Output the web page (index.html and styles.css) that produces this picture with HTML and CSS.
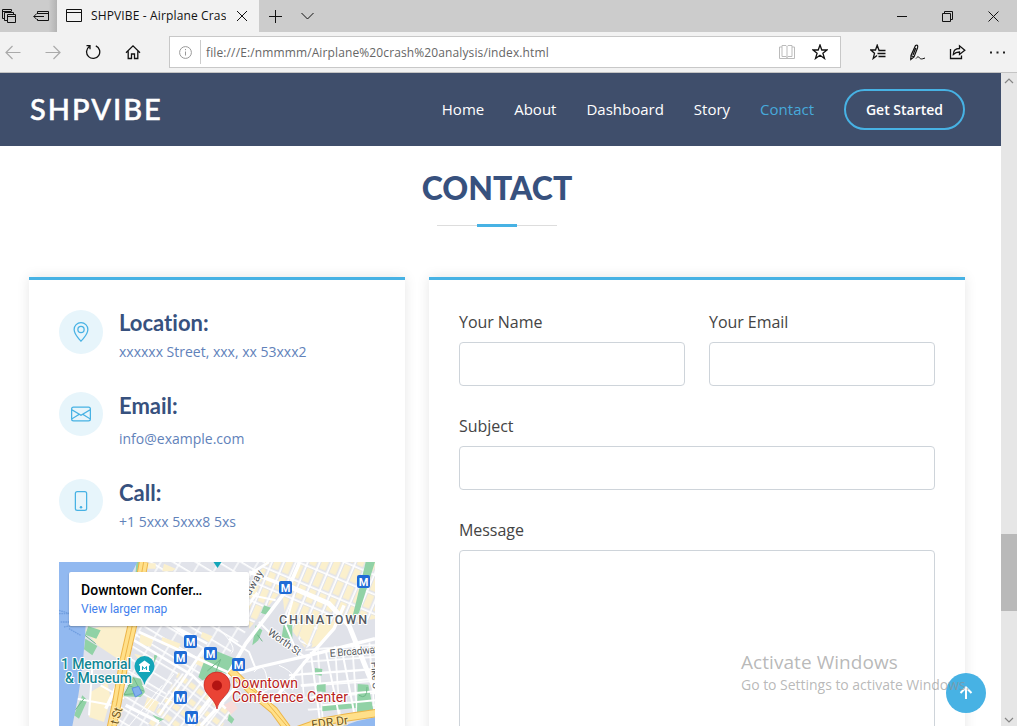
FILE: index.html
```html
<!DOCTYPE html>
<html lang="en">
<head>
<meta charset="utf-8">
<title>SHPVIBE - Airplane Crash Analysis</title>
<link rel="stylesheet" href="styles.css">
</head>
<body>
<div class="window">
  <div class="tabbar">
    <div class="tab-tools">
      <svg class="ico ico-tabs" width="16" height="16" viewBox="0 0 16 16"><path d="M3.500 10.500H1.500V1.500H10.500V3.500M1.500 3.500H10M6 12.500H3.500V4.500H12.500V6.500M6.500 6.500H14.500V14.500H6.500ZM7 8.500H14"/></svg>
      <svg class="ico" width="17" height="16" viewBox="0 0 17 16"><path d="M4.500 6V3.500H15.500V12.500H4.500V11M4.500 5.500H15.500M.8 8.500H11M3.800 5.500L.8 8.500L3.800 11.500"/></svg>
    </div>
    <div class="tab">
      <svg class="ico" width="16" height="14" viewBox="0 0 16 14"><path d="M.5.500H15.500V12.500H.5ZM.5 3.500H15.500"/></svg>
      <span class="tab-title">SHPVIBE - Airplane Crash Analysis</span>
      <svg class="ico tab-close" width="10" height="10" viewBox="0 0 10 10"><path d="M0 0L10 10M10 0L0 10"/></svg>
    </div>
    <svg class="ico new-tab" width="13" height="13" viewBox="0 0 13 13"><path d="M6.500 0V13M0 6.500H13"/></svg>
    <svg class="ico tab-list" width="13" height="8" viewBox="0 0 13 8"><path d="M.5 1L6.500 7L12.500 1"/></svg>
    <div class="window-controls">
      <svg class="ico" width="10" height="11" viewBox="0 0 10 11"><path d="M0 5.500H10"/></svg>
      <svg class="ico" width="11" height="11" viewBox="0 0 11 11"><path d="M.5 2.500H8.500V10.500H.5ZM2.500 2.500V.5H10.500V8.500H8.500"/></svg>
      <svg class="ico" width="11" height="11" viewBox="0 0 11 11"><path d="M.5.500L10.500 10.500M10.500.500L.5 10.500"/></svg>
    </div>
  </div>

  <div class="toolbar">
    <div class="nav-buttons">
      <svg class="ico dim" width="16" height="16" viewBox="0 0 16 16"><path d="M15.500 8.500H1M7.500 2L1 8.500L7.500 15"/></svg>
      <svg class="ico dim" width="16" height="16" viewBox="0 0 16 16"><path d="M.5 8.500H15M8.500 2L15 8.500L8.500 15"/></svg>
      <svg class="ico thick" width="16" height="16" viewBox="0 0 16 16"><path d="M10.800 1.800A6.600 6.600 0 1 1 4.300 2.500M1.500 1.700H5V5.300"/></svg>
      <svg class="ico thick" width="16" height="16" viewBox="0 0 16 16"><path d="M1 8.800L8 1.800L15 8.800M3.200 7.200V14.500H6.500V10H9.500V14.500H12.800V7.200"/></svg>
    </div>
    <div class="address">
      <svg class="ico info" width="13" height="13" viewBox="0 0 13 13"><circle cx="6.500" cy="6.500" r="5.900"/><path d="M6.500 5.500V9.500M6.500 3V4.200"/></svg>
      <span class="address-rule"></span>
      <span class="url">file:///E:/nmmmm/Airplane%20crash%20analysis/index.html</span>
      <svg class="ico book" width="16" height="15" viewBox="0 0 16 15"><path d="M3 2H.5V13.500H15.500V2H13M3 11.500V.5H7L8 1.500L9 .5H13V11.500H9L8 12.500L7 11.500ZM8 1.500V13"/></svg>
      <svg class="ico star" width="16" height="16" viewBox="0 0 16 16"><path d="M8 1L9.800 6H15L10.900 9.200L12.500 14.500L8 11.300L3.500 14.500L5.100 9.200L1 6H6.200Z"/></svg>
    </div>
    <div class="tool-buttons">
      <svg class="ico thick" width="16" height="16" viewBox="0 0 16 16"><path d="M9.500 5.800H8.800L7.200 1.200L5.500 6H.8L4.500 9.300L3.200 14.500L7 11.500M8.500 6.500H15.500M7.500 9.500H15.500M8.500 12.500H15.500"/></svg>
      <svg class="ico" width="17" height="17" viewBox="0 0 17 17"><path d="M6.500 1.500Q9.500 .2 8.500 4L5 13L1.800 15.500L2 11.500ZM2 11.500L5 13M6.800 4L4 11" stroke-width="1.200"/><path d="M7 14.500C9.500 11.500 9.500 13 10.500 14S12.500 15.500 16 14"/></svg>
      <svg class="ico thick" width="17" height="16" viewBox="0 0 17 16"><path d="M1.500 5V14.500H12.500V11.500M4.300 10.500C4.300 6.500 6.500 4.500 10.500 4.500V1.800L15.800 6.300L10.500 10.500V8C7.500 8 6 8.800 4.300 10.500Z"/></svg>
      <svg class="dots" width="15" height="3" viewBox="0 0 15 3"><path d="M0 .5H2V2.500H0ZM6.500.5H8.500V2.500H6.500ZM13 .5H15V2.500H13Z"/></svg>
    </div>
  </div>

  <div class="viewport">
    <div class="page">
      <header class="site-header">
        <div class="logo">SHPVIBE</div>
        <nav class="site-nav">
          <a>Home</a><a>About</a><a>Dashboard</a><a>Story</a><a class="active">Contact</a>
          <a class="get-started">Get Started</a>
        </nav>
      </header>

      <main class="contact">
        <h2 class="section-title">CONTACT</h2>
        <div class="divider"><span class="divider-accent"></span></div>
        <div class="cards">
          <section class="card info-card">
            <div class="info-item">
              <span class="info-icon"><svg width="20" height="20" viewBox="0 0 16 16"><path d="M12.166 8.940c-.524 1.062-1.234 2.120-1.960 3.070A32 32 0 0 1 8 14.580a32 32 0 0 1-2.206-2.570c-.726-.950-1.436-2.008-1.960-3.070C3.304 7.867 3 6.862 3 6a5 5 0 0 1 10 0c0 .862-.305 1.867-.834 2.940M8 16s6-5.686 6-10A6 6 0 0 0 2 6c0 4.314 6 10 6 10"/><path d="M8 8a2 2 0 1 1 0-4 2 2 0 0 1 0 4m0 1a3 3 0 1 0 0-6 3 3 0 0 0 0 6"/></svg></span>
              <div><h4>Location:</h4><p>xxxxxx Street, xxx, xx 53xxx2</p></div>
            </div>
            <div class="info-item email">
              <span class="info-icon"><svg width="20" height="20" viewBox="0 0 16 16"><path d="M0 4a2 2 0 0 1 2-2h12a2 2 0 0 1 2 2v8a2 2 0 0 1-2 2H2a2 2 0 0 1-2-2zm2-1a1 1 0 0 0-1 1v.217l7 4.200 7-4.200V4a1 1 0 0 0-1-1zm13 2.383-4.708 2.825L15 11.105zm-.034 6.876-5.640-3.471L8 9.583l-1.326-.795-5.640 3.470A1 1 0 0 0 2 13h12a1 1 0 0 0 .966-.741M1 11.105l4.708-2.897L1 5.383z"/></svg></span>
              <div><h4>Email:</h4><p>info@example.com</p></div>
            </div>
            <div class="info-item call">
              <span class="info-icon"><svg width="20" height="20" viewBox="0 0 16 16"><path d="M11 1a1 1 0 0 1 1 1v12a1 1 0 0 1-1 1H5a1 1 0 0 1-1-1V2a1 1 0 0 1 1-1zM5 0a2 2 0 0 0-2 2v12a2 2 0 0 0 2 2h6a2 2 0 0 0 2-2V2a2 2 0 0 0-2-2z"/><path d="M8 14a1 1 0 1 0 0-2 1 1 0 0 0 0 2"/></svg></span>
              <div><h4>Call:</h4><p>+1 5xxx 5xxx8 5xs</p></div>
            </div>
            <div class="map">
              <svg class="map-art" width="316" height="164" viewBox="59 562 316 164">
                <defs>
                  <g id="metro"><rect x="-6.500" y="-6.500" width="13" height="13" rx="2" fill="#1f6bd6"/><text y="4" class="metro-m">M</text></g>
                  <pattern id="blocks-east" width="33" height="54" patternUnits="userSpaceOnUse" patternTransform="translate(742 10) rotate(23)"><rect width="33" height="54" fill="#fff"/><rect x="3" y="3" width="28" height="49" fill="#e1e3ea"/><rect x="6" y="5" width="20" height="42" fill="#fbf0cd"/></pattern>
                  <pattern id="blocks-tribeca" width="50" height="35" patternUnits="userSpaceOnUse" patternTransform="translate(250 190) rotate(31)"><rect width="50" height="35" fill="#fff"/><rect x="2" y="2" width="46" height="30" fill="#e1e3ea"/></pattern>
                  <pattern id="blocks-south" width="40" height="30" patternUnits="userSpaceOnUse" patternTransform="translate(330 390) rotate(-53)"><rect width="40" height="30" fill="#fff"/><rect x="2" y="3" width="36" height="25" fill="#e1e3ea"/><rect x="8" y="5" width="16" height="20" fill="#fbf0cd"/></pattern>
                  <pattern id="blocks-river" width="52" height="36" patternUnits="userSpaceOnUse" patternTransform="translate(724 264) rotate(-4)"><rect width="52" height="36" fill="#fff"/><rect x="3" y="3" width="47" height="31" fill="#e0e2e9"/></pattern>
                </defs>
                <g transform="translate(59 562) scale(.33333)">
                  <rect width="948" height="492" fill="#e0e2e9"/>
                  <path d="M260 0H620L570 60V30H260Z" fill="url(#blocks-tribeca)"/>
                  <path d="M230 190H575L470 330L300 492H170Z" fill="url(#blocks-tribeca)"/>
                  <path d="M360 330L440 360L520 450L490 492H265Z" fill="url(#blocks-south)"/>
                  <path d="M620 0H948V170L840 190L665 90L570 200V90Z" fill="url(#blocks-east)"/>
                  <path d="M670 95L840 140L820 205L740 260L680 180Z" fill="url(#blocks-east)"/>
                  <path d="M740 260L948 240V455L760 490L720 350Z" fill="url(#blocks-river)"/>
                  <!-- cream plazas -->
                  <g fill="#fbf0cd">
                    <path d="M120 195L205 192L190 300L115 250L78 205ZM95 390L145 360L155 410L135 480L90 465ZM225 275L285 290L245 300ZM245 215L285 225L275 255L240 245ZM310 225L365 245L355 265L305 245ZM420 285L455 290L440 320L410 305Z"/>
                    <path d="M260 4H290V20H260ZM315 5L350 20L340 28H310ZM430 210L460 223L450 240L425 225ZM265 405L300 420L285 450L255 435ZM735 180L775 168L745 250L720 220ZM785 170L825 185L790 245L757 257Z"/>
                  </g>
                  <!-- parks -->
                  <g fill="#91d2a6">
                    <path d="M450 258L540 295L515 340L490 330L430 355L418 345ZM615 130L636 137L628 160L606 153ZM674 188H700V232L668 226ZM590 190L610 205L598 235L580 250ZM920 0H948L900 153L878 173L890 125ZM896 366L928 368L945 455L894 453ZM768 318L790 321L788 341L768 338ZM776 364H800V390L768 388ZM790 431L850 420L890 423V438L790 448Z"/>
                    <path d="M232 0H244L235 30H230ZM88 193L125 205L112 230L78 218ZM79 230L115 252L100 280L75 262ZM220 345L245 350L258 390L245 405L193 403ZM285 280L297 278L285 303ZM70 400L85 415L60 470L45 460ZM280 458L315 472L300 480ZM510 456L526 472L518 485L506 475Z"/>
                  </g>
                  <path d="M490 432L520 415L536 439L518 456Z" fill="#f7dcda"/>
                  <!-- main streets -->
                  <g fill="none" stroke="#fff" stroke-linejoin="round">
                    <path d="M695 75L810 125L870 190L930 340L970 430" stroke-width="15"/>
                    <path d="M722 0L690 75L560 245L500 350L390 492M570 30L690 75" stroke-width="11"/>
                    <path d="M560 45L630 0M595 92L530 180M435 260L300 460M340 190L445 245M240 210L550 350L650 420M225 235L400 340L500 440" stroke-width="8"/>
                    <path d="M855 130L825 200L750 285L635 425M948 230L760 278L600 315L500 345M550 355L500 410L425 492M215 285L140 440M200 430L300 480M300 160L395 230" stroke-width="10"/>
                    <path d="M755 270L785 492M800 265L840 460M850 270L885 450M690 340L948 322M725 370L948 350M760 405L948 388M790 430L948 415M705 100L680 190L720 285M125 370L195 410M100 315L90 460M55 410L160 430M580 100L650 115M600 180L650 230L740 285M510 230L570 270L590 320" stroke-width="6"/>
                    <path d="M585 330Q620 290 625 365M660 310Q730 340 700 385M600 395Q660 360 690 400M250 370Q320 410 370 430M310 370L210 492M345 335L260 450M480 200Q540 260 515 275" stroke-width="3"/>
                  </g>
                  <path d="M445 327L485 292L465 342M78 220L110 245M195 398L224 347L247 393ZM206 370L255 387M900 400Q925 415 924 375M595 218L610 238M75 410L48 445" fill="none" stroke="#6fb789" stroke-width="3"/>
                  <!-- river, piers and waterfront -->
                  <path d="M0 0H235L205 60L80 190L78 225L70 320L58 400L40 492H0Z" fill="#92b9f0"/>
                  <path d="M852 492L895 477L948 466V492Z" fill="#92b9f0"/>
                  <path d="M0 145L65 165M0 155H65M5 180H65M15 195L65 185M30 200L65 220" fill="none" stroke="#719fe0" stroke-width="4" stroke-dasharray="5 2"/>
                  <!-- highways -->
                  <g fill="none" stroke-linejoin="round">
                    <path d="M254 0L220 190L195 300L174 420L157 500" stroke="#edb549" stroke-width="29"/>
                    <path d="M254 0L220 190L195 300L174 420L157 500" stroke="#ffe08a" stroke-width="23"/>
                    <path d="M254 0L220 190L195 300L174 420L157 500" stroke="#edb549" stroke-width="3"/>
                    <path d="M515 325L585 395L645 445L685 500M700 510L785 480L865 466L960 452" stroke="#edb549" stroke-width="25"/>
                    <path d="M515 325L585 395L645 445L685 500M700 510L785 480L865 466L960 452" stroke="#ffe08a" stroke-width="19"/>
                    <path d="M530 350L610 405L690 500" stroke="#edb549" stroke-width="3"/>
                  </g>
                  <path d="M219 379L239 373L249 394L229 405Z" fill="#82b0ed" stroke="#5b91df" stroke-width="3"/>
                </g>
                <!-- street and area labels -->
                <g class="street">
                  <text transform="translate(250 596) rotate(-60)" textLength="27">dway</text>
                  <text transform="translate(267 634) rotate(35)" textLength="38">Worth St</text>
                  <text transform="translate(330 657) rotate(-5)" textLength="50">E Broadway</text>
                  <text transform="translate(371 662) rotate(86)" textLength="27">Pike S</text>
                  <text transform="translate(312 729) rotate(-8)" textLength="37" class="fdr">FDR Dr</text>
                  <text transform="translate(118 725) rotate(-75)" textLength="17" class="fdr">t St</text>
                </g>
                <text x="279" y="623.500" class="district" textLength="88">CHINATOWN</text>
                <g class="museum"><text x="61" y="668.500" textLength="70">1 Memorial</text><text x="65" y="682.500" textLength="67">&amp; Museum</text></g>
                <path d="M144.500 685C143 677 134.500 674 134.500 666A10 10 0 0 1 154.500 666C154.500 674 146 677 144.500 685Z" fill="#13a5b8"/>
                <path d="M139 664.500L144.500 660.500L150 664.500V665.500H149V671H150V672H139V671H140V665.500H139Z" fill="#fff"/>
                <path d="M142.500 670V666.500L144.500 669L146.500 666.500V670" fill="none" stroke="#13a5b8"/>
                <path d="M213.500 562H221.500L217.500 568Z" fill="#13a5b8"/>
                <use href="#metro" x="285.500" y="587.500"/><use href="#metro" x="363.500" y="581.500"/>
                <use href="#metro" x="190.500" y="641.500"/><use href="#metro" x="180.500" y="657.500"/>
                <use href="#metro" x="210.500" y="653.500"/><use href="#metro" x="238.500" y="664.500"/>
                <use href="#metro" x="180.500" y="697.500"/><use href="#metro" x="191.500" y="717.500"/>
                <path d="M217 709C215 698 204 695 204 685A13 13 0 0 1 230 685C230 695 219 698 217 709Z" fill="#ea4335" stroke="#c5221f" stroke-width=".7"/>
                <circle cx="217" cy="685.500" r="5" fill="#b31412"/>
                <g class="place"><text x="232" y="688" textLength="66">Downtown</text><text x="232" y="702" textLength="116">Conference Center</text></g>
              </svg>
              <div class="map-popup"><strong>Downtown Confer…</strong><a>View larger map</a></div>
            </div>
          </section>

          <form class="card form-card">
            <div class="form-row">
              <label class="field"><span>Your Name</span><input type="text"></label>
              <label class="field"><span>Your Email</span><input type="text"></label>
            </div>
            <label class="field"><span>Subject</span><input type="text"></label>
            <label class="field"><span>Message</span><textarea></textarea></label>
          </form>
        </div>
      </main>
      <a class="back-to-top"><svg width="24" height="24" viewBox="0 0 24 24"><path d="M12 18V7M6.500 12L12 6.500L17.500 12"/></svg></a>
    </div>
    <div class="scrollbar">
      <svg width="10" height="6" viewBox="0 0 10 6"><path d="M1 5L5 1L9 5"/></svg>
      <div class="thumb"></div>
      <svg width="10" height="6" viewBox="0 0 10 6"><path d="M1 1L5 5L9 1"/></svg>
    </div>
  </div>
</div>
<div class="watermark"><div class="watermark-title">Activate Windows</div><div class="watermark-text">Go to Settings to activate Windows.</div></div>
</body>
</html>
```
FILE: styles.css
```css
* { box-sizing: border-box; }
html, body { margin: 0; height: 100%; overflow: hidden; }
body { font-family: "Open Sans", sans-serif; color: #444; background: #fff; }
svg { display: block; flex: none; }
h2, h4, p { margin: 0; }

.window { width: 1017px; height: 726px; display: flex; flex-direction: column; }
.ico { fill: none; stroke: #111; stroke-width: 1; }
.thick { stroke-width: 1.3; }
.dim { stroke: #aaa; stroke-width: 1.2; }

/* browser tab strip */
.tabbar { height: 32px; flex: none; display: flex; align-items: center; background: #ccc; }
.tab-tools { width: 57px; height: 32px; padding-left: 1px; display: flex; align-items: center; gap: 16px; background: linear-gradient(90deg, transparent 85%, #b3b3b3); }
.tab { width: 202px; height: 32px; padding-left: 9px; display: flex; align-items: center; background: #f2f2f2; }
.tab-title { width: 135px; margin-left: 9px; overflow: hidden; white-space: nowrap; font: 12px/18px "Open Sans", sans-serif; letter-spacing: .14px; color: #111; }
.tab-close { margin-left: 11px; }
.new-tab { margin-left: 10px; }
.tab-list { margin-left: 19px; }
.window-controls { margin-left: auto; margin-right: 18px; display: flex; align-items: center; gap: 35px; }

/* browser toolbar */
.toolbar { height: 41px; flex: none; display: flex; align-items: center; background: #f2f2f2; border-bottom: 1px solid #c4c4c4; }
.nav-buttons { width: 169px; padding-left: 5px; display: flex; gap: 24px; }
.address { width: 672px; height: 32px; display: flex; align-items: center; padding-left: 9px; background: #fff; border: 1px solid #c8c8c8; }
.info, .book { stroke: #999; }
.book { margin-left: auto; stroke: #bbb; }
.star { margin: 0 12px 0 17px; stroke-width: 1.3; }
.address-rule { width: 1px; height: 24px; margin: 0 5px 0 8px; background: #ccc; }
.url { font-size: 12px; letter-spacing: .12px; color: #666; }
.tool-buttons { margin-left: auto; margin-right: 12px; display: flex; align-items: center; gap: 23px; }
.dots { margin-left: 1px; fill: #222; }

/* page */
.viewport { flex: 1; min-height: 0; display: flex; }
.page { position: relative; width: 1001px; height: 653px; overflow: hidden; }
.site-header { height: 73px; padding: 0 36px 0 30px; display: flex; align-items: center; justify-content: space-between; background: #3f4e6b; color: #fff; }
.logo { padding-bottom: 2px; font: 500 29px/40px Lato, sans-serif; letter-spacing: 2px; -webkit-text-stroke: .5px #fff; }
.site-nav { display: flex; align-items: center; gap: 30px; font-size: 15px; }
.site-nav a { padding-bottom: 2px; }
.site-nav .active { color: #47aadb; }
.site-nav .get-started { width: 121px; height: 41px; padding: 0; display: flex; align-items: center; justify-content: center; border: 2px solid #47b2e4; border-radius: 50px; font-size: 14px; font-weight: 600; }

.contact { padding: 22px 36px 0 29px; }
.section-title { text-align: center; font: 900 32px/40px Lato, sans-serif; color: #37517e; }
.divider { width: 120px; height: 3px; margin: 16px auto 0 408px; display: flex; justify-content: center; background: linear-gradient(#fff 1px, #ddd 1px, #ddd 2px, #fff 2px); }
.divider-accent { width: 40px; height: 3px; background: #47b2e4; }
.cards { margin-top: 50px; display: flex; gap: 24px; }
.card { height: 480px; padding: 30px; border-top: 3px solid #47b2e4; background: #fff; box-shadow: 0 0 12px rgba(0, 0, 0, .1); }
.info-card { width: 376px; }
.form-card { width: 536px; }

.info-item { height: 82px; display: flex; gap: 16px; }
.info-item.email { height: 87px; }
.info-icon { width: 44px; height: 44px; flex: none; display: grid; place-items: center; border-radius: 50%; background: #e7f5fb; }
.info-icon svg { fill: #47b2e4; }
.info-item h4 { font: 700 22px/26px Lato, sans-serif; font-variant-ligatures: none; color: #37517e; }
.info-item p { margin-top: 5px; font-size: 14px; line-height: 21px; color: #6182ba; }
.info-item.email p { margin-top: 9px; }
.info-item.email h4, .info-item.call h4 { padding-top: 1px; }

/* embedded map */
.map { position: relative; width: 316px; height: 164px; margin-top: 1px; overflow: hidden; font-family: Roboto, sans-serif; }
.map-popup { position: absolute; left: 10px; top: 10px; width: 180px; height: 54px; padding: 9px 12px; background: #fff; border-radius: 2px; box-shadow: 0 1px 2px rgba(0, 0, 0, .25); }
.map-popup strong { display: block; font-size: 14px; line-height: 19px; letter-spacing: .05px; font-weight: 500; color: #000; white-space: nowrap; }
.map-popup a { display: block; font-size: 12px; line-height: 18px; color: #427fed; }
.map-art text { font-family: Roboto, sans-serif; paint-order: stroke; stroke: #fff; stroke-width: 2px; stroke-linejoin: round; }
.map-art .metro-m { font-size: 11px; font-weight: 700; fill: #fff; stroke: none; text-anchor: middle; }
.street { font-size: 10.5px; fill: #555960; }
.map-art .fdr { font-size: 12px; fill: #70571e; stroke: #ffe9ac; }
.district { font-size: 12.5px; font-weight: 500; fill: #555960; }
.museum { font-size: 14px; font-weight: 500; fill: #138795; }
.place { font-size: 14px; fill: #b8211b; }

/* contact form */
.form-row { display: grid; grid-template-columns: 1fr 1fr; gap: 24px; }
.field { display: block; margin-bottom: 28px; font-size: 16px; line-height: 24px; }
.field span { display: block; margin-bottom: 8px; }
.form-card .field span { letter-spacing: -.05px; }
.field input, .field textarea { display: block; width: 100%; height: 44px; padding: 8px; border: 1px solid #ced4da; border-radius: 4px; outline: 0; background: #fff; resize: none; }
.field textarea { height: 240px; }
.back-to-top { position: absolute; left: 946px; top: 600px; width: 40px; height: 40px; display: grid; place-items: center; border-radius: 50%; background: #47b2e4; }
.back-to-top path { fill: none; stroke: #fff; stroke-width: 2; }

.scrollbar { width: 16px; display: flex; flex-direction: column; align-items: center; padding: 5px 0 3px; background: #e6e6e6; }
.scrollbar path { fill: none; stroke: #858585; stroke-width: 1.2; }
.thumb { width: 16px; height: 77px; margin: 450px 0 auto; background: #b9b9b9; }

.watermark { position: absolute; left: 741px; top: 649px; color: rgba(145, 145, 145, .65); white-space: nowrap; pointer-events: none; }
.watermark-title { font-size: 19px; line-height: 26px; letter-spacing: .06px; }
.watermark-text { font-size: 14px; line-height: 20px; letter-spacing: -.03px; }
```
